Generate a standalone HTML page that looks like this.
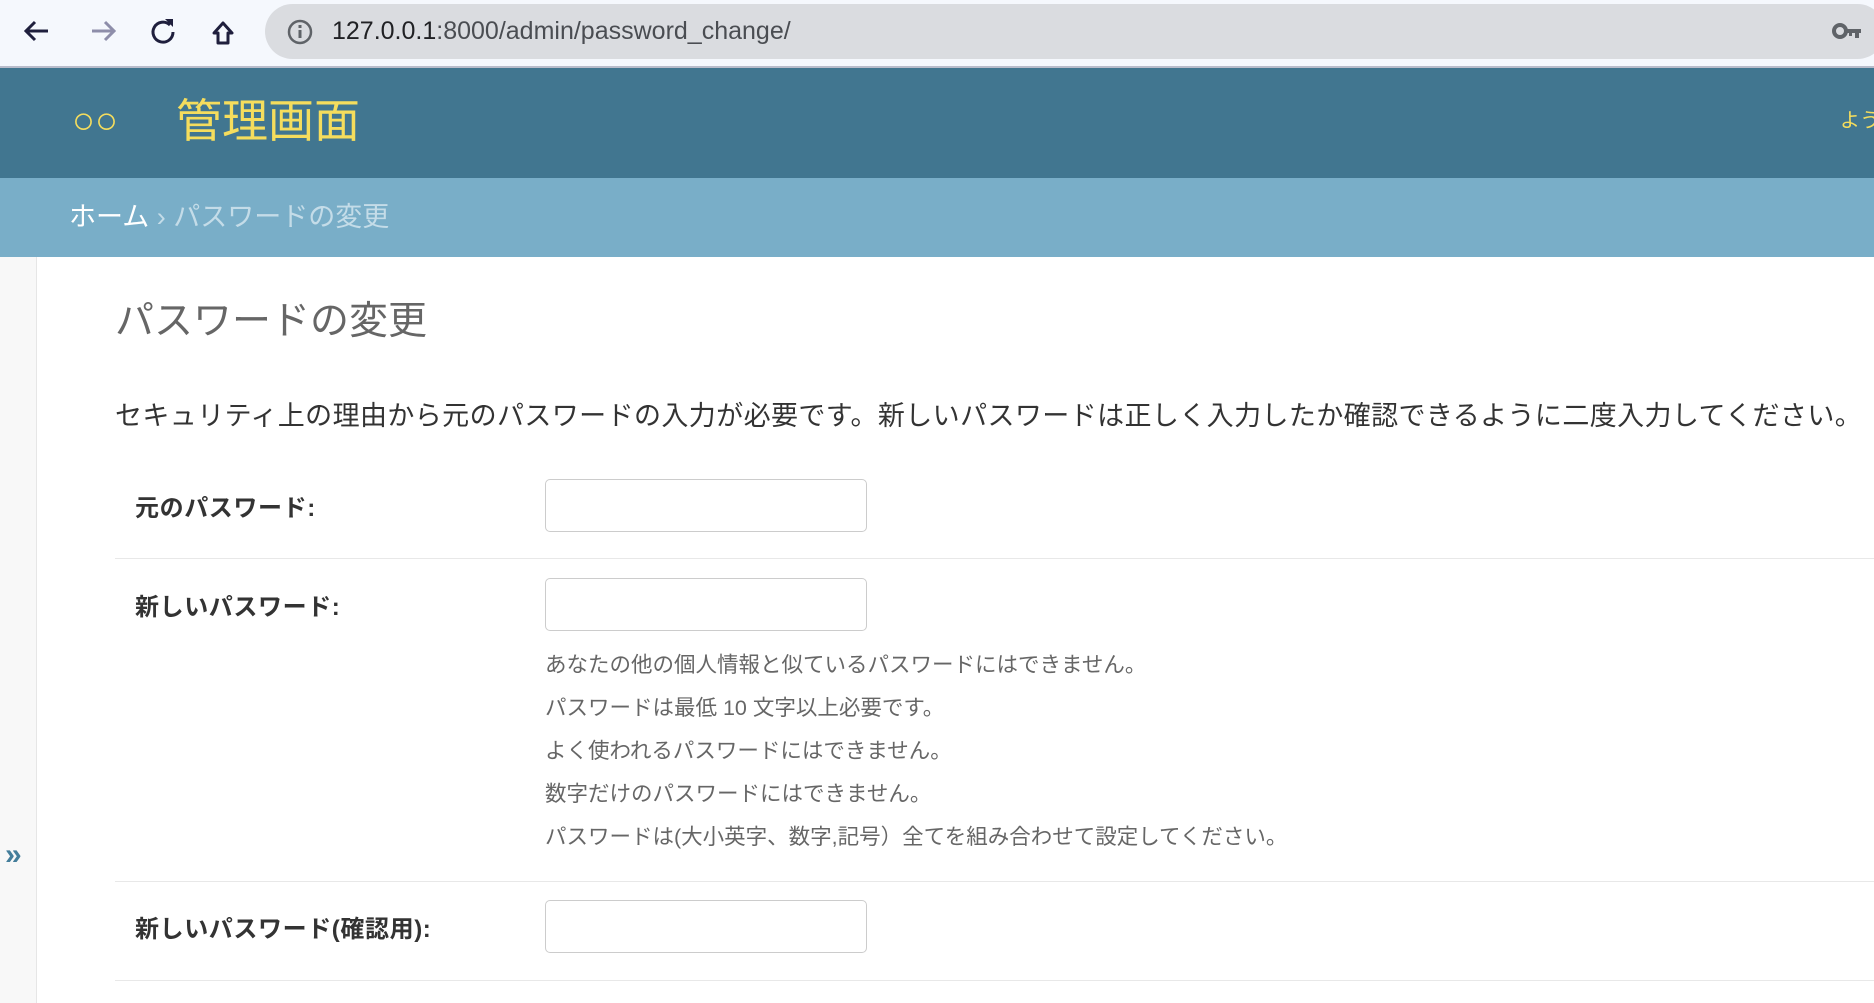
<!DOCTYPE html>
<html><head><meta charset="utf-8">
<style>
*{margin:0;padding:0;box-sizing:border-box}
body{width:1874px;height:1003px;overflow:hidden;background:#fff;font-family:"Liberation Sans","Noto Sans CJK JP",sans-serif;position:relative}
.abs{position:absolute;white-space:nowrap}
#bar{left:0;top:0;width:1874px;height:68px;background:#f5f8fd;border-bottom:2px solid #b8bccb}
#pill{left:265px;top:4px;width:1620px;height:55px;background:#dadce0;border-radius:28px}
#hdr{left:0;top:68px;width:1874px;height:110px;background:#417690}
#bc{left:0;top:178px;width:1874px;height:79px;background:#79aec8}
#side{left:0;top:257px;width:37px;height:746px;background:#f8f8f8;border-right:1px solid #e6e6e6}
.lbl{font-size:24px;font-weight:bold;color:#333;line-height:30px;letter-spacing:0.6px}
.inp{width:322px;height:53px;border:1px solid #ccc;border-radius:5px;background:#fff}
.sep{left:115px;width:1759px;height:1px;background:#e8e8e8}
.help{font-size:21.5px;color:#666;left:545px;line-height:26px}
</style></head><body>
<div id="bar" class="abs"></div>
<div id="pill" class="abs"></div>
<svg class="abs" style="left:20px;top:14px" width="230" height="36" viewBox="0 0 230 36">
<path d="M28 17H6M15 8L6 17l9 9" stroke="#1f1f3d" stroke-width="3" fill="none"/>
<path d="M72 17h22M85 8l9 9-9 9" stroke="#8e8eaa" stroke-width="3" fill="none"/>
<path d="M150 11a10 10 0 1 0 3 7" stroke="#1f1f3d" stroke-width="3" fill="none"/><path d="M145 5l8 0 0 8z" fill="#1f1f3d"/>
<path d="M194 19l9-10 9 10h-4v10h-10v-10z" stroke="#1f1f3d" stroke-width="3" fill="none" stroke-linejoin="round"/>
</svg>
<svg class="abs" style="left:287px;top:19px" width="26" height="26"><circle cx="13" cy="13" r="11" stroke="#5f6368" stroke-width="2.5" fill="none"/><rect x="11.5" y="11" width="3" height="8" fill="#5f6368"/><rect x="11.5" y="6" width="3" height="3" fill="#5f6368"/></svg>
<div class="abs" style="left:332px;top:15px;font-size:25px;color:#202124;line-height:32px">127.0.0.1<span style="color:#4a4d52">:8000/admin/password_change/</span></div>
<svg class="abs" style="left:1832px;top:22px" width="30" height="20"><circle cx="8" cy="9" r="6" stroke="#5f6368" stroke-width="4" fill="none"/><rect x="13" y="7" width="16" height="4" fill="#5f6368"/><rect x="23" y="9" width="4" height="7" fill="#5f6368"/><rect x="17" y="9" width="3" height="5" fill="#5f6368"/></svg>
<div id="hdr" class="abs"></div>
<div class="abs" style="left:72px;top:96px;font-size:38px;color:#f5dd5d;line-height:50px;font-family:'Liberation Sans',sans-serif">○○</div>
<div class="abs" style="left:176px;top:92px;font-size:46px;color:#f5dd5d;line-height:58px">管理画面</div>
<div class="abs" style="left:1840px;top:108px;font-size:20px;color:#f5dd5d;line-height:26px">よう</div>
<div id="bc" class="abs"></div>
<div class="abs" style="left:69px;top:199px;font-size:27px;color:#fff;line-height:36px">ホーム<span style="color:#c4dce8"> › パスワードの変更</span></div>
<div id="side" class="abs"></div>
<div class="abs" style="left:5px;top:838px;font-size:30px;font-weight:bold;color:#447e9b;line-height:34px">»</div>
<div class="abs" style="left:115px;top:298px;font-size:39px;color:#666;line-height:48px">パスワードの変更</div>
<div class="abs" style="left:115px;top:399px;font-size:27px;color:#333;line-height:34px;letter-spacing:0.4px">セキュリティ上の理由から元のパスワードの入力が必要です。新しいパスワードは正しく入力したか確認できるように二度入力してください。</div>
<div class="abs lbl" style="left:135px;top:494px">元のパスワード:</div>
<div class="abs inp" style="left:545px;top:479px"></div>
<div class="abs sep" style="top:558px"></div>
<div class="abs lbl" style="left:135px;top:593px">新しいパスワード:</div>
<div class="abs inp" style="left:545px;top:578px"></div>
<div class="abs help" style="top:652px">あなたの他の個人情報と似ているパスワードにはできません。</div>
<div class="abs help" style="top:695px">パスワードは最低 10 文字以上必要です。</div>
<div class="abs help" style="top:738px">よく使われるパスワードにはできません。</div>
<div class="abs help" style="top:781px">数字だけのパスワードにはできません。</div>
<div class="abs help" style="top:824px">パスワードは(大小英字、数字,記号）全てを組み合わせて設定してください。</div>
<div class="abs sep" style="top:881px"></div>
<div class="abs lbl" style="left:135px;top:915px">新しいパスワード(確認用):</div>
<div class="abs inp" style="left:545px;top:900px"></div>
<div class="abs sep" style="top:980px"></div>
</body></html>
